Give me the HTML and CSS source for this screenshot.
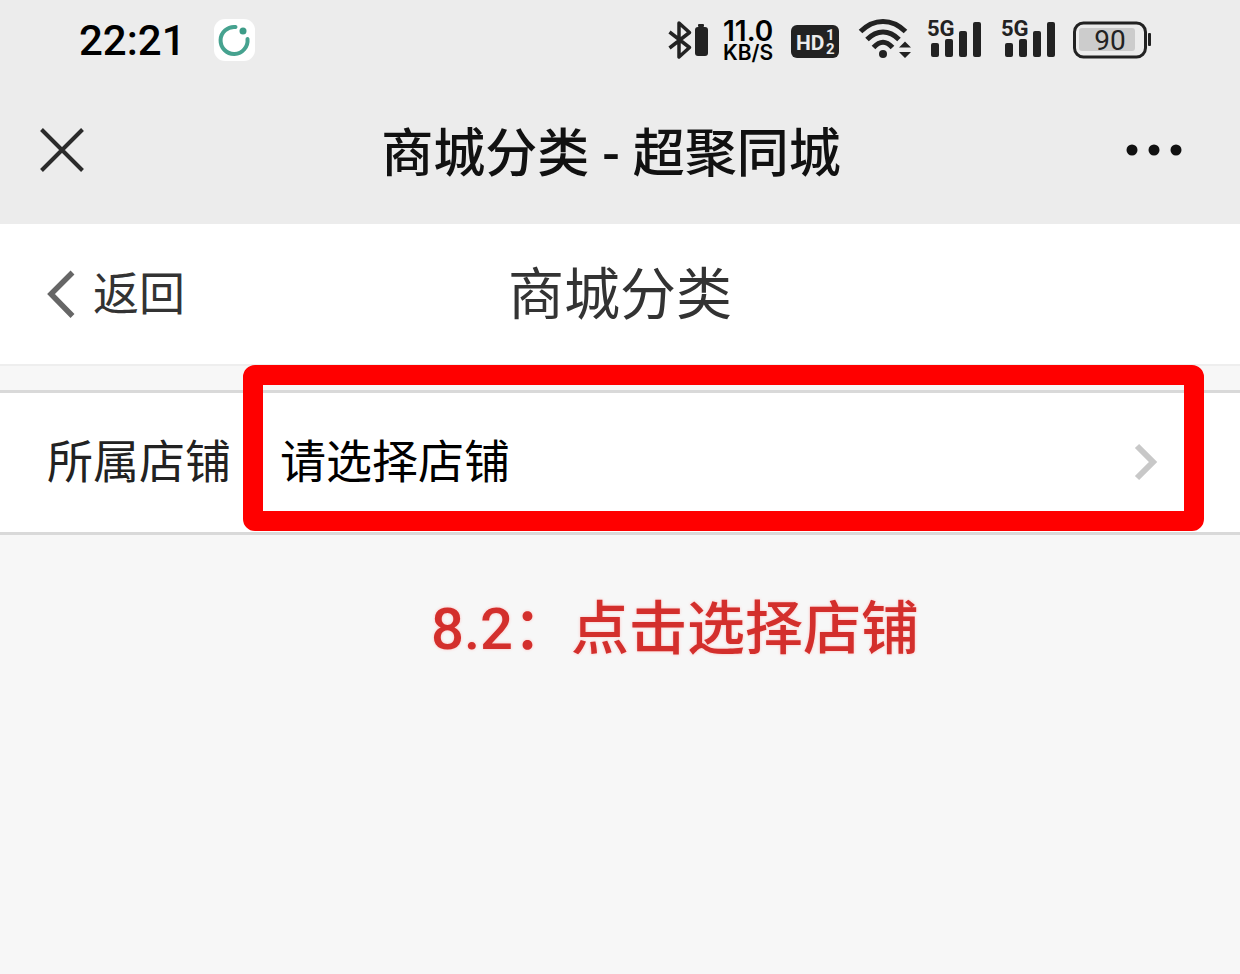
FILE: index.html
```html
<!DOCTYPE html>
<html lang="zh-CN">
    <head>
        <meta charset="utf-8">
        <meta name="viewport" content="width=device-width, initial-scale=1">
        <title>商城分类 - 超聚同城</title>
        <link rel="stylesheet" href="styles.css">
    </head>
    <body>
        <div id="statusBar">
            <span class="time">22:21</span>
            <svg class="appIcon" width="41" height="42" viewBox="0 0 41 42">
                <rect width="41" height="42" rx="11" fill="#fff"/>
                <path d="M21.500 8A13.500 13.500 0 1 0 33.500 20" fill="none" stroke="#46a28f" stroke-width="4" stroke-linecap="round"/>
                <circle cx="29" cy="12" r="3.500" fill="#3d9c88"/>
            </svg>
            <div class="statusIcons">
                <svg width="40" height="40" viewBox="0 0 40 40">
                    <path d="M1.500 12L21.500 27.500L11 37V3L21.500 12.500L1.500 28" fill="none" stroke="#222" stroke-width="3.500" stroke-linejoin="round"/>
                    <rect x="27" y="7" width="13" height="29" rx="3" fill="#222"/>
                    <rect x="30" y="4" width="6" height="3" rx="1" fill="#222"/>
                </svg>
                <div class="speed"><span class="rate">11.0</span><span class="unit">KB/S</span></div>
                <svg width="48" height="40" viewBox="0 0 48 40">
                    <rect y="5" width="48" height="33" rx="6" fill="#222"/>
                    <text class="hd" x="5" y="30">HD</text>
                    <text class="sim" x="35" y="20">1</text>
                    <text class="sim" x="35" y="34">2</text>
                </svg>
                <svg class="wifi" width="52" height="40" viewBox="0 0 52 40">
                    <g fill="none" stroke="#222" stroke-width="5">
                        <path d="M1.500 11.500C15 -2 33 -2 46.500 11.500"/>
                        <path d="M8 19.500C18 9.500 30 9.500 40 19.500"/>
                        <path d="M14.500 27.500C21 20.500 27 20.500 33.500 27.500"/>
                    </g>
                    <circle cx="24" cy="34" r="4" fill="#222"/>
                    <path d="M40 27.500L46 21.500L52 27.500ZM40 32L46 38L52 32Z" fill="#222"/>
                </svg>
                <svg width="56" height="40" viewBox="0 0 56 40">
                    <text class="net" x="0" y="16">5G</text>
                    <g fill="#222">
                        <rect x="4" y="23" width="8" height="14" rx="2"/>
                        <rect x="18" y="19" width="8" height="18" rx="2"/>
                        <rect x="32" y="11" width="8" height="26" rx="2"/>
                        <rect x="46" y="2" width="8" height="35" rx="2"/>
                    </g>
                </svg>
                <svg width="56" height="40" viewBox="0 0 56 40">
                    <text class="net" x="0" y="16">5G</text>
                    <g fill="#222">
                        <rect x="4" y="23" width="8" height="14" rx="2"/>
                        <rect x="18" y="19" width="8" height="18" rx="2"/>
                        <rect x="32" y="11" width="8" height="26" rx="2"/>
                        <rect x="46" y="2" width="8" height="35" rx="2"/>
                    </g>
                </svg>
                <svg class="battery" width="79" height="40" viewBox="0 0 79 40">
                    <rect x="1.500" y="3" width="71" height="34" rx="9" fill="none" stroke="#222" stroke-width="3"/>
                    <rect x="6" y="8" width="56" height="23" rx="3" fill="#ccc"/>
                    <rect x="75" y="13" width="3" height="13" rx="1" fill="#222"/>
                    <text class="level" x="37" y="30">90</text>
                </svg>
            </div>
        </div>

        <div id="titleBar">
            <button class="close" aria-label="关闭">
                <svg width="44" height="44" viewBox="0 0 44 44">
                    <path d="M1.500 1.500L42.500 42.500M42.500 1.500L1.500 42.500" stroke="#2b2b2b" stroke-width="4"/>
                </svg>
            </button>
            <h1>商城分类 - 超聚同城</h1>
            <button class="more" aria-label="更多">
                <svg width="56" height="12" viewBox="0 0 56 12">
                    <g fill="#111">
                        <circle cx="6" cy="6" r="5.500"/>
                        <circle cx="28" cy="6" r="5.500"/>
                        <circle cx="50" cy="6" r="5.500"/>
                    </g>
                </svg>
            </button>
        </div>

        <div id="pageHeader">
            <a class="back" href="#">
                <svg width="28" height="48" viewBox="0 0 28 48">
                    <path d="M25.500 2.500L4 24L25.500 46" fill="none" stroke="#666" stroke-width="5.500"/>
                </svg>
                返回
            </a>
            <h2>商城分类</h2>
        </div>

        <form id="shopRow">
            <label for="shop">所属店铺</label>
            <select id="shop">
                <option>请选择店铺</option>
            </select>
            <svg width="22" height="36" viewBox="0 0 22 36">
                <path d="M2 2L18 18L2 34" fill="none" stroke="#c8c8c8" stroke-width="6"/>
            </svg>
            <!-- red frame around the select -->
            <div class="frame"></div>
        </form>

        <p id="note">8.2：点击选择店铺</p>
    </body>
</html>
```
FILE: styles.css
```css
*{
    box-sizing:border-box;
}
body{
    margin:0;
    background-color:#f7f7f7;
    font-family:Roboto, "Noto Sans CJK SC", sans-serif;
    color:#222;
}
h1,h2,p{
    margin:0;
}
svg{
    display:block;
    flex:none;
    overflow:visible;
}
button{
    padding:0;
    border:0;
    background:none;
}
#statusBar{
    display:flex;
    align-items:center;
    height:80px;
    padding:0 88px 0 79px;
    background-color:#ececec;
}
.time{
    font-size:42px;
    font-weight:500;
    color:#000;
}
.appIcon{
    margin-left:28px;
}
.statusIcons{
    display:flex;
    align-items:center;
    gap:18px;
    margin-left:auto;
}
.speed{
    display:flex;
    flex-direction:column;
    width:50px;
    margin-left:-3px;
    padding-top:2px;
    font-family:Inter, sans-serif;
    color:#000;
}
.rate{
    font-size:28px;
    font-weight:600;
    line-height:24px;
}
.unit{
    font-size:21px;
    font-weight:600;
    line-height:20px;
}
.wifi{
    margin-left:2px;
    margin-right:-2px;
}
.battery{
    margin-left:-2px;
}
.hd{
    font:bold 21px Roboto, sans-serif;
    fill:#ececec;
}
.sim{
    font:bold 15px Roboto, sans-serif;
    fill:#ececec;
}
.net{
    font:bold 22px Roboto, sans-serif;
    fill:#222;
}
.level{
    font:28px Roboto, sans-serif;
    fill:#222;
    text-anchor:middle;
}
#titleBar{
    display:grid;
    grid-template-columns:1fr auto 1fr;
    align-items:center;
    height:144px;
    padding:0 58px 4px 40px;
    background-color:#ececec;
}
#titleBar h1{
    padding-top:10px;
    font-size:52px;
    font-weight:500;
    line-height:76px;
    color:#111;
}
.more{
    justify-self:end;
}
#pageHeader{
    display:grid;
    grid-template-columns:1fr auto 1fr;
    align-items:center;
    height:142px;
    padding:0 47px;
    background-color:#fff;
    border-bottom:2px solid #eee;
}
.back{
    display:flex;
    align-items:center;
    gap:18px;
    font-size:46px;
    line-height:68px;
    color:#333;
    text-decoration:none;
}
#pageHeader h2{
    padding-top:2px;
    font-size:56px;
    font-weight:400;
    line-height:80px;
    color:#333;
}
#shopRow{
    position:relative;
    display:flex;
    align-items:center;
    height:145px;
    margin-top:24px;
    padding:0 83px 2px 47px;
    background-color:#fff;
    border-top:3px solid #d9d9d9;
    border-bottom:3px solid #d9d9d9;
    font-size:46px;
    line-height:68px;
}
#shop{
    flex:1;
    height:100px;
    margin-left:49px;
    padding:0;
    border:0;
    appearance:none;
    background:none;
    font:inherit;
    color:#000;
}
.frame{
    position:absolute;
    top:-28px;
    right:36px;
    bottom:1px;
    left:243px;
    border:20px solid #f00;
    border-radius:12px;
    pointer-events:none;
}
#note{
    margin-top:50px;
    padding-left:431px;
    font-size:58px;
    font-weight:500;
    line-height:88px;
    color:#d32f2c;
    text-shadow:0 0 3px #fbb;
}
```
